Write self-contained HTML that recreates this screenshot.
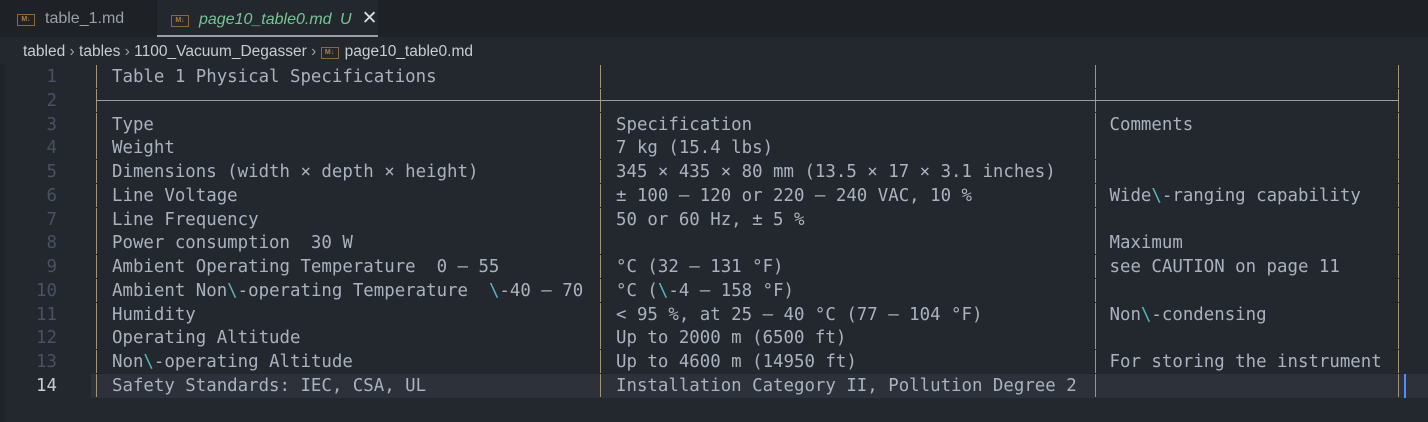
<!DOCTYPE html>
<html><head><style>
body{margin:0;width:1428px;height:422px;background:#23272e;overflow:hidden;position:relative;font-family:"DejaVu Sans Mono","Liberation Mono",monospace;}
.tabs{position:absolute;left:0;top:0;width:1428px;height:37px;background:#1e2227;}
.tab{position:absolute;top:0;height:37px;font-family:"Liberation Sans",sans-serif;font-size:16px;line-height:37px;}
.md{display:inline-block;width:16px;height:10px;border:1px solid #8a6a3a;color:#b08040;font-size:7px;line-height:10px;text-align:center;vertical-align:2px;margin-right:10px;font-weight:bold}
.crumb{position:absolute;top:43px;left:23px;font-family:"Liberation Sans",sans-serif;font-size:15.5px;color:#c8ccd4;}
.row{position:absolute;left:0;width:1428px;height:24px;font-size:17.4px;line-height:24px;color:#abb2bf;white-space:pre;}
.row span{position:absolute;}
.ln{right:1371px;color:#495162;text-align:right}
.p{top:0;width:1px;height:23px;background:#a39478}
.c{color:#56b6c2}
</style></head><body>
<div class="tabs">
 <div class="tab" style="left:0;width:156px;background:#1e2227;color:#9aa0aa"><span style="margin-left:17px" class="md">M↓</span>table_1.md</div>
 <div class="tab" style="left:157px;width:221px;background:#23272e;border-bottom:2px solid #9aa0aa;box-sizing:border-box;color:#73c991"><span style="margin-left:14px" class="md">M↓</span><i>page10_table0.md</i> <i style="margin-left:4px">U</i><span style="color:#d7dae0;margin-left:10px;font-size:19px">✕</span></div>
</div>
<div class="crumb">tabled <span style="color:#9aa0aa">›</span> tables <span style="color:#9aa0aa">›</span> 1100_Vacuum_Degasser <span style="color:#9aa0aa">›</span> <span class="md" style="margin-right:6px">M↓</span>page10_table0.md</div>
<div style="position:absolute;left:0;top:64px;width:5px;height:358px;background:#1f2329"></div>
<div style="position:absolute;left:91px;top:374px;width:1337px;height:24px;background:#2c313a"></div>
<div style="position:absolute;left:1404px;top:374px;width:2px;height:24px;background:#528bff"></div>
<div id="ed"></div>
<script>
var L=[
["Table 1 Physical Specifications","",""],
null,
["Type","Specification","Comments"],
["Weight","7 kg (15.4 lbs)",""],
["Dimensions (width × depth × height)","345 × 435 × 80 mm (13.5 × 17 × 3.1 inches)",""],
["Line Voltage","± 100 – 120 or 220 – 240 VAC, 10 %","Wide\\-ranging capability"],
["Line Frequency","50 or 60 Hz, ± 5 %",""],
["Power consumption  30 W","","Maximum"],
["Ambient Operating Temperature  0 – 55","°C (32 – 131 °F)","see CAUTION on page 11"],
["Ambient Non\\-operating Temperature  \\-40 – 70","°C (\\-4 – 158 °F)",""],
["Humidity","< 95 %, at 25 – 40 °C (77 – 104 °F)","Non\\-condensing"],
["Operating Altitude","Up to 2000 m (6500 ft)",""],
["Non\\-operating Altitude","Up to 4600 m (14950 ft)","For storing the instrument"],
["Safety Standards: IEC, CSA, UL","Installation Category II, Pollution Degree 2",""]];
function esc(s){return s.replace(/&/g,"&amp;").replace(/</g,"&lt;").replace(/\\/g,'<b class="c" style="font-weight:normal">\\</b>');}
var h="",cw=10.5,o=91;
for(var i=0;i<L.length;i++){
 var t=65+i*23.77;
 h+='<div class="row" style="top:'+t+'px"><span class="ln" style="'+(i==13?'color:#c8ccd4':'')+'">'+(i+1)+'</span>';
 if(L[i]===null){
  [96,600,1095,1398].forEach(function(x){h+='<span style="left:'+x+'px;top:0;width:1px;height:23px;background:#a39478"></span>';});
  h+='<span style="left:96px;top:11px;width:1303px;height:1px;background:#9aa0aa"></span>';
 } else {
  [96,600,1095,1398].forEach(function(x){h+='<span class="p" style="left:'+x+'px"></span>';});
  var cols=[2,50,97];
  for(var j=0;j<3;j++){ if(L[i][j]) h+='<span style="left:'+(o+cols[j]*cw)+'px">'+esc(L[i][j])+'</span>';}
 }
 h+='</div>';
}
document.getElementById("ed").innerHTML=h;
</script>
</body></html>
